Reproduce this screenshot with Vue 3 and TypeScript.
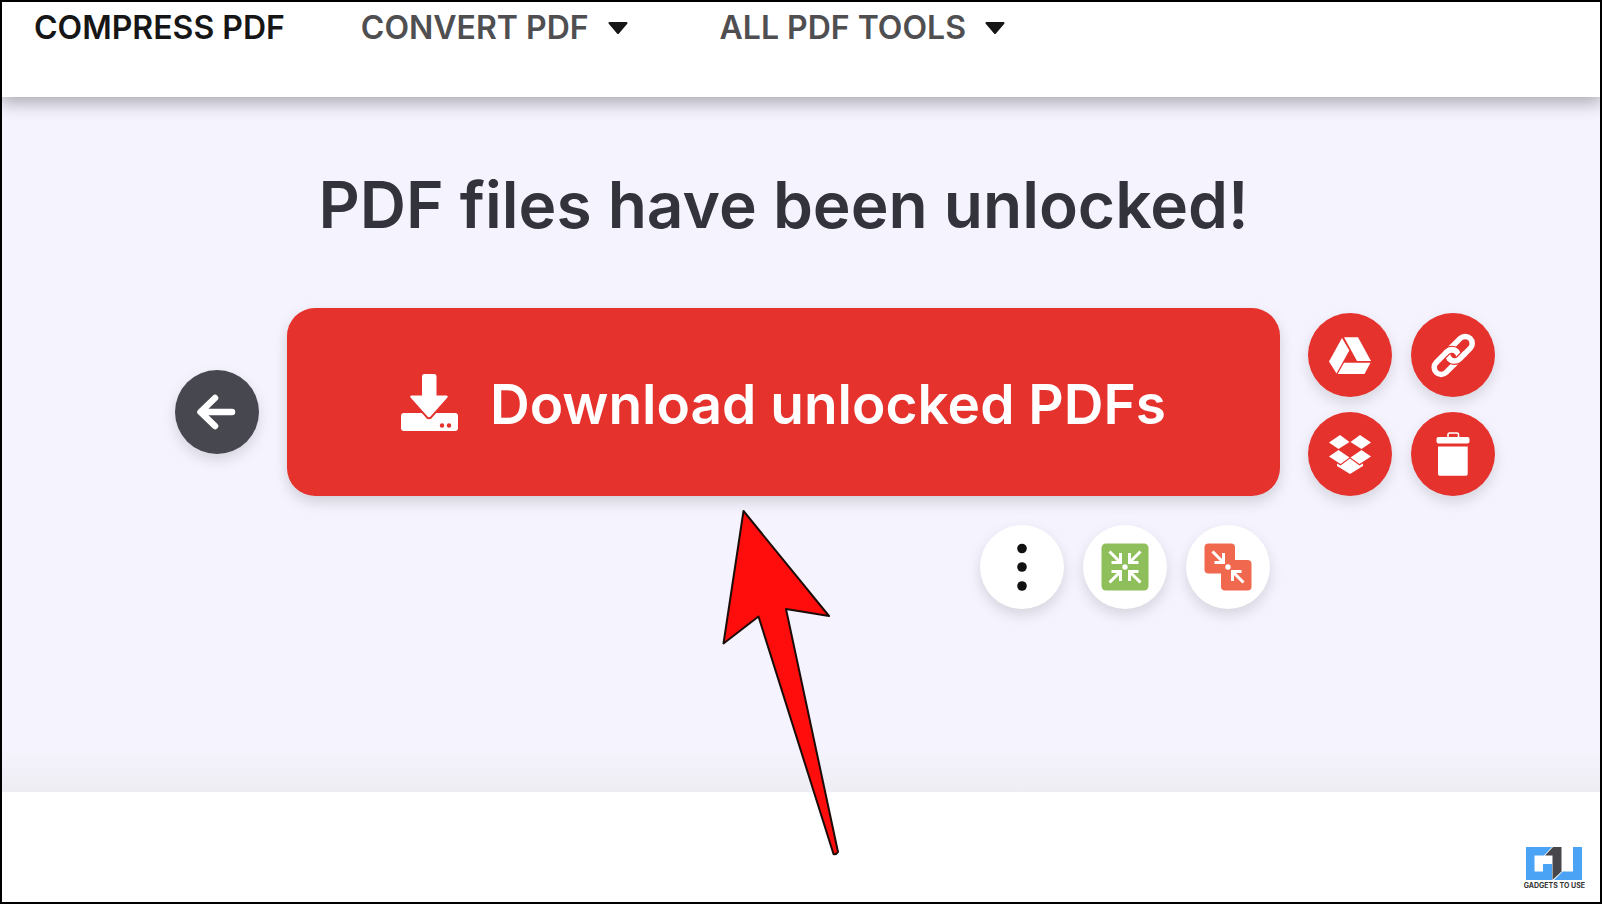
<script setup lang="ts">
interface NavItem {
  label: string
  active: boolean
  menu: boolean
}

const navItems: NavItem[] = [
  { label: 'COMPRESS PDF', active: true, menu: false },
  { label: 'CONVERT PDF', active: false, menu: true },
  { label: 'ALL PDF TOOLS', active: false, menu: true },
]
</script>

<template>
  <div class="page">
    <header class="topbar">
      <nav class="nav" aria-label="Tools">
        <template v-for="item in navItems" :key="item.label">
          <button v-if="item.menu" type="button" class="nav-item nav-menu" aria-haspopup="true">
            <span>{{ item.label }}</span>
            <svg class="caret" viewBox="0 0 20 12" aria-hidden="true">
              <path d="M1.5 1 H18.5 L10 11 Z" />
            </svg>
          </button>
          <a v-else href="#" class="nav-item" :class="{ active: item.active }">{{ item.label }}</a>
        </template>
      </nav>
    </header>

    <main class="result">
      <div class="workspace">
        <h1 class="title">PDF files have been unlocked!</h1>

        <button type="button" class="round back" aria-label="Back">
          <svg viewBox="0 0 84 84" aria-hidden="true">
            <path d="M57 42 H26 M40 28 L25.500 42 L40 56" fill="none" stroke="#fff" stroke-width="6.500" stroke-linecap="round" stroke-linejoin="round" />
          </svg>
        </button>

        <div class="download-wrap">
          <button type="button" class="download">
            <svg class="download-icon" viewBox="0 0 57 57" aria-hidden="true">
              <rect x="0" y="39" width="57" height="18" rx="3" fill="#fff" />
              <path d="M23.500 0 H33 Q35.500 0 35.500 2.500 V21.500 H45 Q48 21.500 46 24 L29.500 42.500 Q28 44 26.500 42.500 L10 24 Q8 21.500 11 21.500 H21 V2.500 Q21 0 23.500 0 Z" fill="#fff" stroke="#e5322d" stroke-width="4" paint-order="stroke" />
              <circle cx="41" cy="51.500" r="2.200" fill="#e5322d" />
              <circle cx="48" cy="51.500" r="2.200" fill="#e5322d" />
            </svg>
            <span class="download-label">Download unlocked PDFs</span>
          </button>
          <svg class="pointer" viewBox="720 506 124 352" aria-hidden="true">
            <path d="M743.500 511 L829 616 L786 609 L838 852 Q836 855 833.500 854 L758.500 616.500 L723.500 643.500 Z" fill="#ff0c0c" stroke="#1d0d08" stroke-width="2" stroke-linejoin="round" />
          </svg>
        </div>

        <div class="side-actions">
          <button type="button" class="round red" aria-label="Save to Google Drive">
            <svg viewBox="0 0 84 84" aria-hidden="true" fill="#fff">
              <path d="M34 25 L41.300 37.500 L28.500 60.500 L21 48.500 Z" />
              <path d="M36 24.300 H50 L63 48 H49 Z" />
              <path d="M36 49.700 H62.500 L56.500 61 H29.700 Z" />
            </svg>
          </button>
          <button type="button" class="round red" aria-label="Copy link">
            <svg viewBox="0 0 84 84" aria-hidden="true" fill="none">
              <g transform="translate(42.200 42.400) rotate(-45)">
                <rect x="-5" y="-7" width="29" height="14" rx="7" stroke="#fff" stroke-width="5.500" />
                <path d="M-8 -7 H-2 A7 7 0 0 1 5 0" stroke="#e5322d" stroke-width="8" />
                <rect x="-24" y="-7" width="29" height="14" rx="7" stroke="#fff" stroke-width="5.500" />
                <path d="M8 7 H2 A7 7 0 0 1 -5 0" stroke="#e5322d" stroke-width="8" />
                <path d="M10 7 H2 A7 7 0 0 1 -5 -1" stroke="#fff" stroke-width="5.500" />
                <path d="M-4 -7 H-2 A7 7 0 0 1 5 1" stroke="#fff" stroke-width="5.500" />
              </g>
            </svg>
          </button>
          <button type="button" class="round red" aria-label="Save to Dropbox">
            <svg viewBox="0 0 84 84" aria-hidden="true" fill="#fff">
              <path d="M32 23 L41.500 30 L30.500 37 L21 30.500 Z" />
              <path d="M52 23 L42.500 30 L53.500 37 L63 30.500 Z" />
              <path d="M30.500 38 L41.500 45.500 L32.500 52 L21 44.500 Z" />
              <path d="M53.500 38 L42.500 45.500 L51.500 52 L63 44.500 Z" />
              <path d="M42 46.500 L51.500 53.500 L55 51.500 V54 L42 62 L29 54 V51.500 L32.500 53.500 Z" />
            </svg>
          </button>
          <button type="button" class="round red" aria-label="Delete">
            <svg viewBox="0 0 84 84" aria-hidden="true" fill="#fff">
              <path d="M37 26 V22.500 Q37 21 38.500 21 H46 Q47.500 21 47.500 22.500 V26" fill="none" stroke="#fff" stroke-width="1.600" />
              <rect x="25.500" y="25" width="33" height="6.500" rx="2" />
              <path d="M27 34.500 H56.700 V62 Q56.700 63.700 55 63.700 H28.700 Q27 63.700 27 62 Z" />
            </svg>
          </button>
        </div>

        <div class="more-actions">
          <button type="button" class="round white" aria-label="More tools">
            <svg viewBox="0 0 84 84" aria-hidden="true" fill="#111">
              <circle cx="42" cy="23.500" r="4.800" />
              <circle cx="42" cy="42" r="4.800" />
              <circle cx="42" cy="61" r="4.800" />
            </svg>
          </button>
          <button type="button" class="round white" aria-label="Compress PDF">
            <svg viewBox="0 0 84 84" aria-hidden="true">
              <rect x="18.500" y="18.500" width="47" height="47" rx="4.500" fill="#8fbf5b" />
              <path d="M26.500 26.500 L37.500 37.500 M28.500 37.500 H37.500 V28 M57.500 26.500 L46.500 37.500 M55.500 37.500 H46.500 V28 M26.500 57.500 L37.500 46.500 M28.500 46.500 H37.500 V56 M57.500 57.500 L46.500 46.500 M55.500 46.500 H46.500 V56" fill="none" stroke="#fff" stroke-width="3" />
              <circle cx="42" cy="42" r="2.700" fill="#fff" />
            </svg>
          </button>
          <button type="button" class="round white" aria-label="Merge PDF">
            <svg viewBox="0 0 84 84" aria-hidden="true">
              <rect x="18.500" y="18.500" width="30.500" height="30" rx="4" fill="#f0694f" />
              <rect x="35" y="35" width="30.500" height="30.500" rx="4" fill="#f0694f" />
              <path d="M26.500 26.500 L37.500 37.500 M28.500 37.500 H37.500 V28 M57.500 57.500 L46.500 46.500 M55.500 46.500 H46.500 V56" fill="none" stroke="#fff" stroke-width="3" />
              <circle cx="42" cy="42" r="2.700" fill="#fff" />
            </svg>
          </button>
        </div>
      </div>
    </main>

    <footer class="footer">
      <div class="brand">
        <svg class="brand-mark" viewBox="0 0 56 33" aria-hidden="true">
          <path d="M0 0 H26 L18 8.500 H8.500 V24.500 H17 V17 H26 V33 H0 Z" fill="#4ba3f5" />
          <path d="M47 0 H56 V33 H28 L36.500 24.500 H47 Z" fill="#4ba3f5" />
          <path d="M27 0 H35.500 V24.500 L26.500 33 V8.500 H19 Z" fill="#47474b" />
        </svg>
        <span class="brand-name">GADGETS TO USE</span>
      </div>
    </footer>
  </div>
</template>

<style>
body {
  margin: 0;
}
</style>

<style scoped>
.page {
  box-sizing: border-box;
  min-height: 100vh;
  display: flex;
  flex-direction: column;
  border: 2px solid #000;
  background: #fff;
  font-family: Inter, "Liberation Sans", sans-serif;
  overflow: hidden;
}

button {
  border: 0;
  padding: 0;
  font: inherit;
  cursor: pointer;
}

.topbar {
  position: relative;
  z-index: 1;
  box-sizing: border-box;
  height: 95px;
  padding: 6px 32px 0;
  background: #fff;
  box-shadow: 0 4px 16px 2px rgba(0, 0, 0, 0.3);
}

.nav {
  display: flex;
  gap: 76px;
}

.nav-item {
  background: none;
  color: #4f4f51;
  font-size: 32px;
  font-weight: 600;
  line-height: 40px;
  text-decoration: none;
  white-space: nowrap;
}

.nav-item.active {
  color: #161616;
}

.nav-menu {
  display: flex;
  align-items: center;
  gap: 19px;
  padding-right: 16px;
}

.caret {
  width: 20px;
  height: 12px;
  fill: #161616;
  stroke: #161616;
  stroke-width: 2;
  stroke-linejoin: round;
}

.result {
  flex: 1;
  padding: 68px 104px 0 173px;
  background: linear-gradient(to top, #eeedf3 0, #f5f4fe 44px);
}

.workspace {
  display: grid;
  grid-template-columns: 84px 1fr 188px;
  column-gap: 28px;
}

.title {
  grid-column: 2;
  margin: 0 0 63px;
  color: #33333b;
  font-size: 64px;
  font-weight: 600;
  line-height: 80px;
  text-align: center;
  white-space: nowrap;
}

.round {
  display: block;
  width: 84px;
  height: 84px;
  border-radius: 50%;
  box-shadow: 0 6px 14px rgba(0, 0, 0, 0.13);
}

.round svg {
  display: block;
  width: 84px;
  height: 84px;
}

.back {
  grid-column: 1;
  align-self: end;
  margin-bottom: 42px;
  background: #47484f;
}

.download-wrap {
  position: relative;
}

.download {
  display: flex;
  align-items: center;
  justify-content: center;
  gap: 32px;
  width: 100%;
  height: 188px;
  border-radius: 28px;
  background: #e5322d;
  box-shadow: 0 6px 14px rgba(0, 0, 0, 0.15);
  color: #fff;
  font-size: 55px;
  font-weight: 600;
  line-height: 72px;
  white-space: nowrap;
}

.download-label {
  padding-top: 4px;
}

.download-icon {
  width: 57px;
  height: 57px;
  overflow: visible;
}

.pointer {
  position: absolute;
  z-index: 2;
  top: calc(100% + 10px);
  left: calc(50% - 64px);
  width: 124px;
  height: 352px;
  pointer-events: none;
}

.side-actions {
  display: grid;
  grid-template-columns: 84px 84px;
  column-gap: 19px;
  align-content: end;
  row-gap: 15px;
}

.red {
  background: #e5322d;
}

.more-actions {
  grid-column: 2;
  display: flex;
  justify-content: flex-end;
  gap: 19px;
  padding: 29px 10px 0 0;
}

.white {
  background: #fff;
}

.footer {
  box-sizing: border-box;
  height: 110px;
  display: flex;
  align-items: flex-end;
  justify-content: flex-end;
  padding: 0 15px 11px;
  background: #fff;
}

.brand {
  display: flex;
  flex-direction: column;
  align-items: center;
  gap: 1px;
}

.brand-mark {
  width: 56px;
  height: 33px;
}

.brand-name {
  color: #333;
  font-size: 7px;
  font-weight: 700;
  line-height: 10px;
  white-space: nowrap;
}
</style>
